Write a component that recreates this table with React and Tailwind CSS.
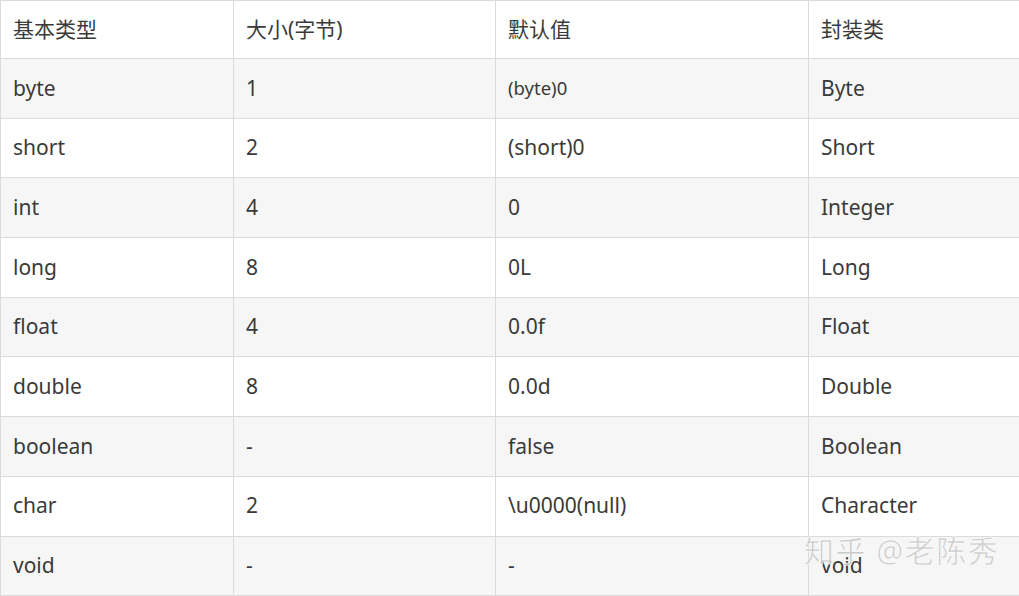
const rows = [
  ['byte', '1', '(byte)0', 'Byte'],
  ['short', '2', '(short)0', 'Short'],
  ['int', '4', '0', 'Integer'],
  ['long', '8', '0L', 'Long'],
  ['float', '4', '0.0f', 'Float'],
  ['double', '8', '0.0d', 'Double'],
  ['boolean', '-', 'false', 'Boolean'],
  ['char', '2', '\\u0000(null)', 'Character'],
  ['void', '-', '-', 'void'],
];

export default function App() {
  return (
    <div className="relative w-[1019px] h-[596px] overflow-hidden bg-white text-[#3a3a3a] font-['Noto_Sans','Noto_Sans_CJK_SC',sans-serif]">
      <table className="w-[1020px] table-fixed border-collapse">
        <colgroup>
          <col className="w-[233px]" />
          <col className="w-[262px]" />
          <col className="w-[313px]" />
          <col className="w-[212px]" />
        </colgroup>
        <thead>
          <tr className="h-[58px] bg-white">
            {['基本类型', '大小(字节)', '默认值', '封装类'].map((h) => (
              <th key={h} className="border border-[#dbdbdb] px-[12px] text-left font-normal text-[21px]">
                {h}
              </th>
            ))}
          </tr>
        </thead>
        <tbody>
          {rows.map((r, i) => (
            <tr key={r[0]} className={i % 2 === 0 ? 'h-[59.7px] bg-[#f6f6f6]' : 'h-[59.7px] bg-white'}>
              {r.map((c, j) => (
                <td
                  key={j}
                  className={
                    i === 0 && j === 2
                      ? 'border border-[#dbdbdb] px-[12px] text-[18.5px]'
                      : 'border border-[#dbdbdb] px-[12px] text-[21px]'
                  }
                >
                  {c}
                </td>
              ))}
            </tr>
          ))}
        </tbody>
      </table>

      {/* 水印 */}
      <div className="absolute left-[804px] top-[528px] text-[30px] tracking-[1.5px] text-[#c6c6c6] opacity-90 [-webkit-text-stroke:0.6px_#ffffff]">
        知乎 @老陈秀
      </div>
    </div>
  );
}
